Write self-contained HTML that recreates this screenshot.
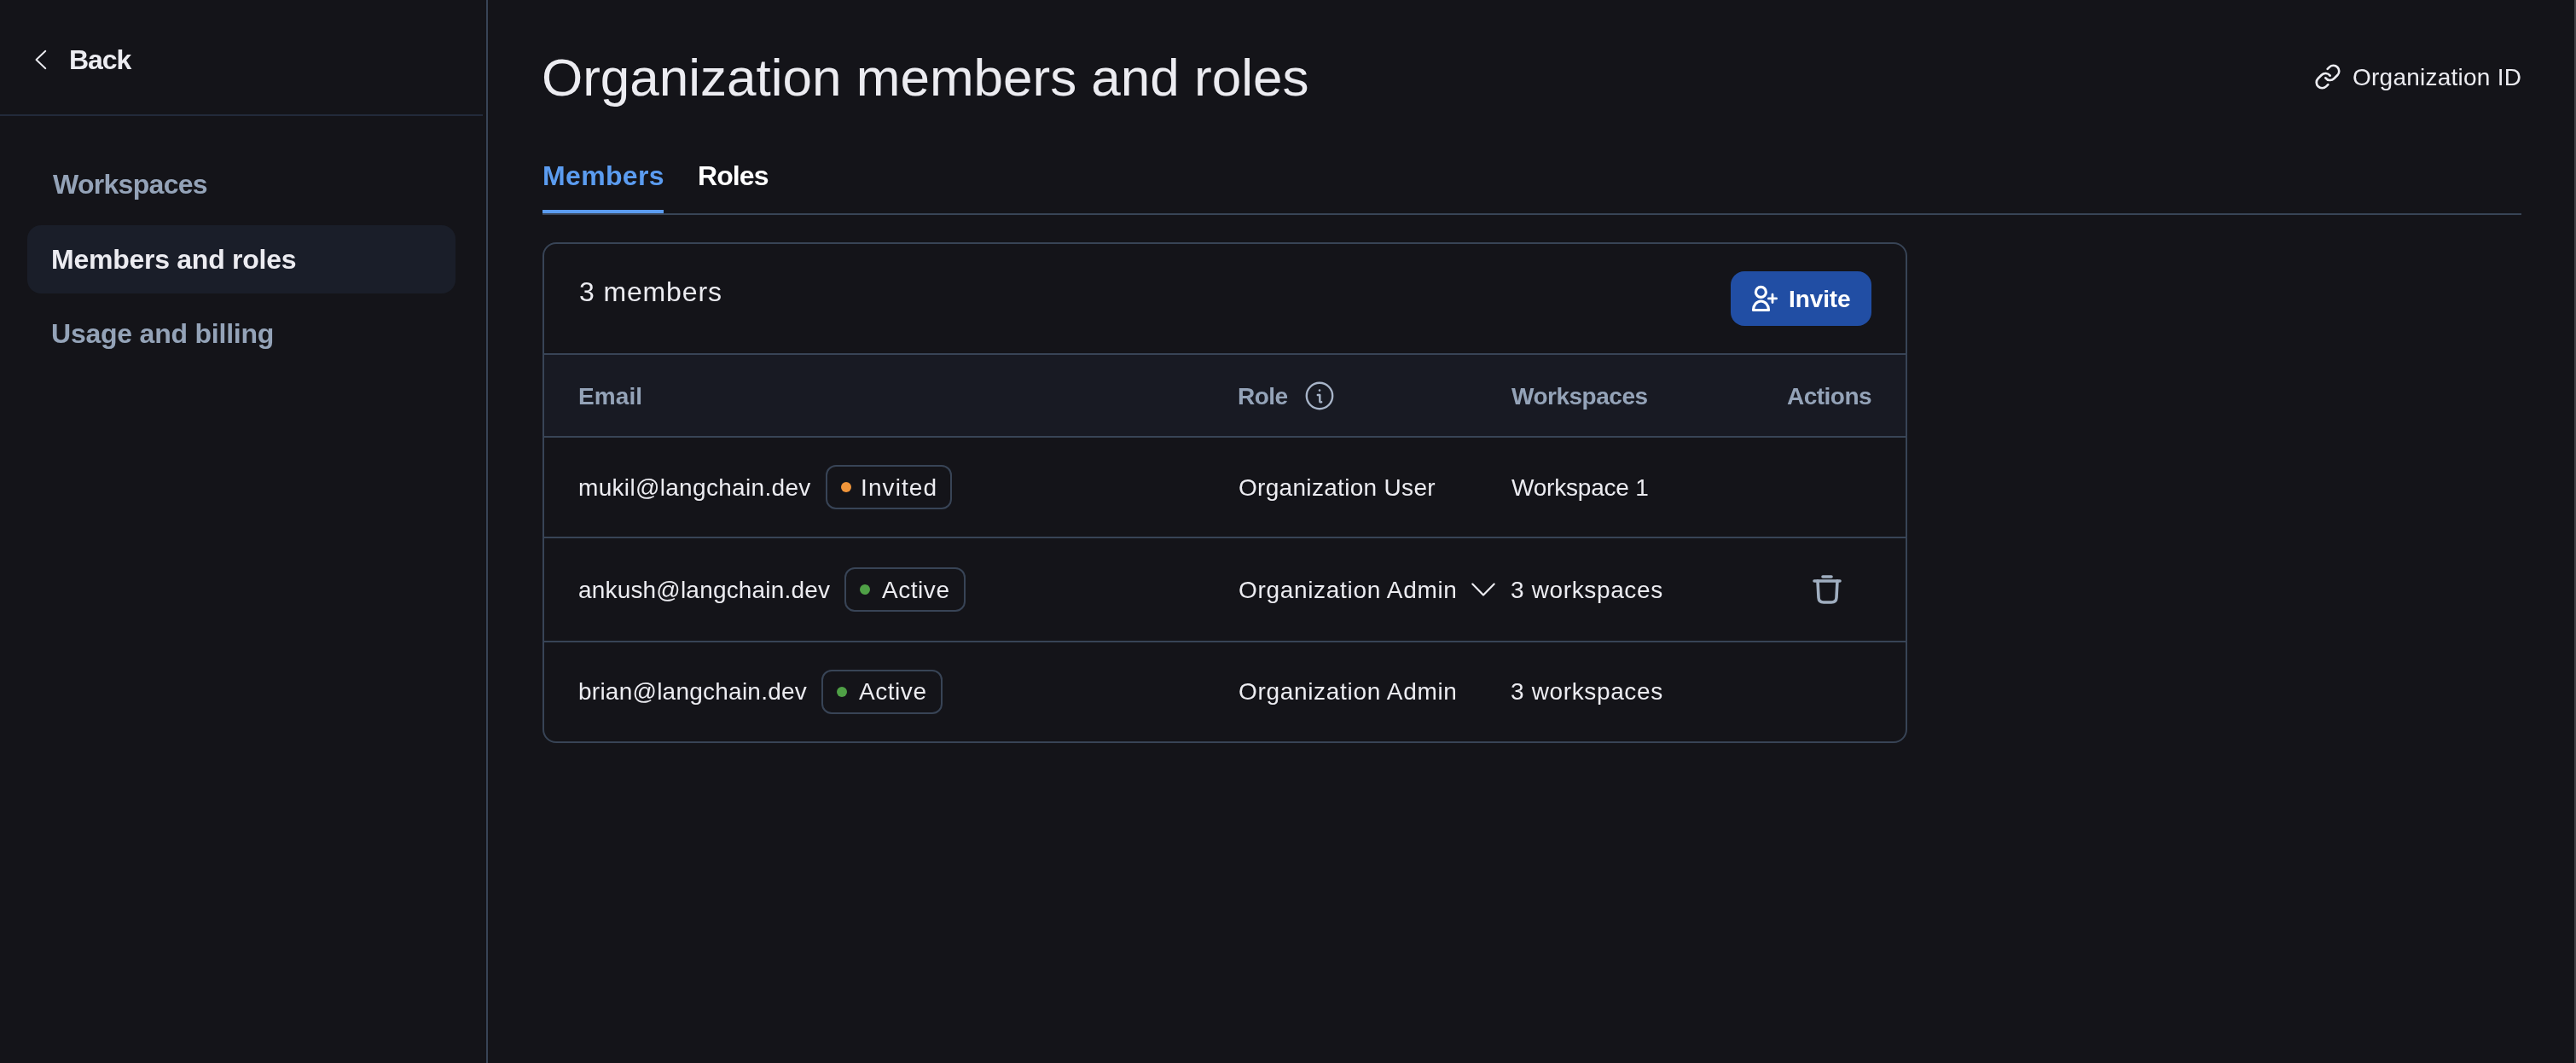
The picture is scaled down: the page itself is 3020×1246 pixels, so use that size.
<!DOCTYPE html>
<html><head><meta charset="utf-8">
<style>
html,body{margin:0;padding:0;}
body{width:3020px;height:1246px;background:#141419;position:relative;overflow:hidden;font-family:"Liberation Sans",sans-serif;color:#ececf1;}
.a{position:absolute;}
.t{position:absolute;white-space:nowrap;line-height:1;will-change:transform;}
.b{font-weight:700;}
.sl{color:#94a3b8;}
</style></head><body>
<!-- sidebar -->
<div class="a" style="left:570px;top:0;width:2px;height:1246px;background:#384456"></div>
<div class="a" style="left:0;top:134px;width:566px;height:2px;background:#222a3a"></div>
<svg class="a" style="left:38px;top:56px" width="20" height="28" viewBox="0 0 20 28"><path d="M15.3 3.8 L4.5 14 L15.3 24.2" fill="none" stroke="#ececf1" stroke-width="1.9" stroke-linecap="round" stroke-linejoin="round"/></svg>
<div class="t b" style="left:80.5px;top:54px;font-size:32px;letter-spacing:-1.1px">Back</div>
<div class="t b sl" style="left:62px;top:200px;font-size:32px;letter-spacing:-0.7px">Workspaces</div>
<div class="a" style="left:32px;top:264px;width:502px;height:80px;border-radius:16px;background:#1a1e29"></div>
<div class="t b" style="left:60px;top:288px;font-size:32px;letter-spacing:-0.26px">Members and roles</div>
<div class="t b sl" style="left:60px;top:375px;font-size:32px;letter-spacing:-0.22px">Usage and billing</div>

<!-- main header -->
<div class="t" style="left:635px;top:60px;font-size:62px;letter-spacing:-0.0px">Organization members and roles</div>
<svg class="a" style="left:2713px;top:74px" width="32" height="32" viewBox="0 0 24 24" fill="none" stroke="#ececf1" stroke-width="2" stroke-linecap="round" stroke-linejoin="round"><path d="M10 13a5 5 0 0 0 7.54.54l3-3a5 5 0 0 0-7.07-7.07l-1.72 1.71"/><path d="M14 11a5 5 0 0 0-7.54-.54l-3 3a5 5 0 0 0 7.07 7.07l1.71-1.71"/></svg>
<div class="t" style="left:2757.5px;top:77px;font-size:28px;letter-spacing:0.24px">Organization ID</div>

<!-- tabs -->
<div class="t b" style="left:636px;top:190px;font-size:32px;letter-spacing:0.35px;color:#5b9cf0">Members</div>
<div class="t b" style="left:818px;top:190px;font-size:32px;letter-spacing:-0.9px;color:#ffffff">Roles</div>
<div class="a" style="left:636px;top:250px;width:2320px;height:2px;background:#384456"></div>
<div class="a" style="left:636px;top:246px;width:142px;height:4px;background:#5b9cf0"></div>

<!-- card -->
<div class="a" style="left:636px;top:284px;width:1596px;height:583px;border:2px solid #384456;border-radius:16px;overflow:hidden">
  <div class="a" style="left:0;top:128px;width:1596px;height:2px;background:#384456"></div>
  <div class="a" style="left:0;top:130px;width:1596px;height:95px;background:#181a23"></div>
  <div class="a" style="left:0;top:225px;width:1596px;height:2px;background:#384456"></div>
  <div class="a" style="left:0;top:343px;width:1596px;height:2px;background:#384456"></div>
  <div class="a" style="left:0;top:465px;width:1596px;height:2px;background:#384456"></div>
</div>
<div class="t" style="left:678.5px;top:326px;font-size:32px;letter-spacing:0.86px">3 members</div>

<!-- invite button -->
<div class="a" style="left:2029px;top:318px;width:165px;height:64px;border-radius:16px;background:#214ea4"></div>
<svg class="a" style="left:2050px;top:332px" width="38" height="38" viewBox="0 0 38 38" fill="none" stroke="#fff" stroke-width="3.2" stroke-linecap="round" stroke-linejoin="round">
 <circle cx="14.4" cy="10.4" r="6"/>
 <path d="M5.5 31.5 A9 10.5 0 0 1 23.5 31.5 Z"/>
 <path d="M23.4 17.9 H32.6 M28 13.2 V22.6" stroke-width="2.8"/>
</svg>
<div class="t b" style="left:2096.5px;top:337px;font-size:28px;letter-spacing:-0.1px;color:#fff">Invite</div>

<!-- table header -->
<div class="t b sl" style="left:677.5px;top:451px;font-size:28px;letter-spacing:0.1px">Email</div>
<div class="t b sl" style="left:1451px;top:451px;font-size:28px;letter-spacing:-0.5px">Role</div>
<svg class="a" style="left:1529px;top:446px" width="36" height="36" viewBox="0 0 36 36" fill="none" stroke="#a7b4c8" stroke-width="2.4"><circle cx="18" cy="18" r="15.2"/><circle cx="18" cy="11.6" r="1.3" fill="#a7b4c8" stroke="none"/><path d="M15.8 17 H18.3 V24.5 Q18.3 25.7 20.2 25.3" stroke-linecap="round" stroke-linejoin="round"/></svg>
<div class="t b sl" style="left:1772px;top:451px;font-size:28px;letter-spacing:-0.49px">Workspaces</div>
<div class="t b sl" style="left:2094.5px;top:451px;font-size:28px;letter-spacing:-0.52px">Actions</div>

<!-- row 1 -->
<div class="t" style="left:678px;top:558px;font-size:28px;letter-spacing:0.32px">mukil@langchain.dev</div>
<div class="a" style="left:968px;top:545px;width:144px;height:48px;border:2px solid #384456;border-radius:12px"></div>
<div class="a" style="left:986px;top:565px;width:12px;height:12px;border-radius:50%;background:#f0953a"></div>
<div class="t" style="left:1009px;top:558px;font-size:28px;letter-spacing:1.1px">Invited</div>
<div class="t" style="left:1452px;top:558px;font-size:28px;letter-spacing:0.31px">Organization User</div>
<div class="t" style="left:1772px;top:558px;font-size:28px;letter-spacing:-0.2px">Workspace 1</div>

<!-- row 2 -->
<div class="t" style="left:678px;top:678px;font-size:28px;letter-spacing:0.18px">ankush@langchain.dev</div>
<div class="a" style="left:990px;top:665px;width:138px;height:48px;border:2px solid #384456;border-radius:12px"></div>
<div class="a" style="left:1008px;top:685px;width:12px;height:12px;border-radius:50%;background:#4fa046"></div>
<div class="t" style="left:1034px;top:678px;font-size:28px;letter-spacing:0.54px">Active</div>
<div class="t" style="left:1452px;top:678px;font-size:28px;letter-spacing:0.68px">Organization Admin</div>
<svg class="a" style="left:1722px;top:680px" width="34" height="22" viewBox="0 0 34 22"><path d="M4.3 4.6 L17 17.4 L29.7 4.6" fill="none" stroke="#ececf1" stroke-width="2.2" stroke-linecap="round" stroke-linejoin="round"/></svg>
<div class="t" style="left:1771px;top:678px;font-size:28px;letter-spacing:0.64px">3 workspaces</div>
<svg class="a" style="left:2122px;top:670px" width="40" height="40" viewBox="0 0 40 40" fill="none" stroke="#a0aec0" stroke-width="3.6" stroke-linecap="round" stroke-linejoin="round"><path d="M5 11 H35"/><path d="M15 6 H25"/><path d="M9 11 L10 30.5 Q10.3 36 16 36 H25 Q30.7 36 31 30.5 L32 11"/></svg>

<!-- row 3 -->
<div class="t" style="left:678px;top:797px;font-size:28px;letter-spacing:0.24px">brian@langchain.dev</div>
<div class="a" style="left:963px;top:785px;width:138px;height:48px;border:2px solid #384456;border-radius:12px"></div>
<div class="a" style="left:981px;top:805px;width:12px;height:12px;border-radius:50%;background:#4fa046"></div>
<div class="t" style="left:1007px;top:797px;font-size:28px;letter-spacing:0.54px">Active</div>
<div class="t" style="left:1452px;top:797px;font-size:28px;letter-spacing:0.68px">Organization Admin</div>
<div class="t" style="left:1771px;top:797px;font-size:28px;letter-spacing:0.64px">3 workspaces</div>

<!-- scrollbar edge -->
<div class="a" style="left:3018px;top:0;width:2px;height:1246px;background:#434247"></div>
</body></html>
